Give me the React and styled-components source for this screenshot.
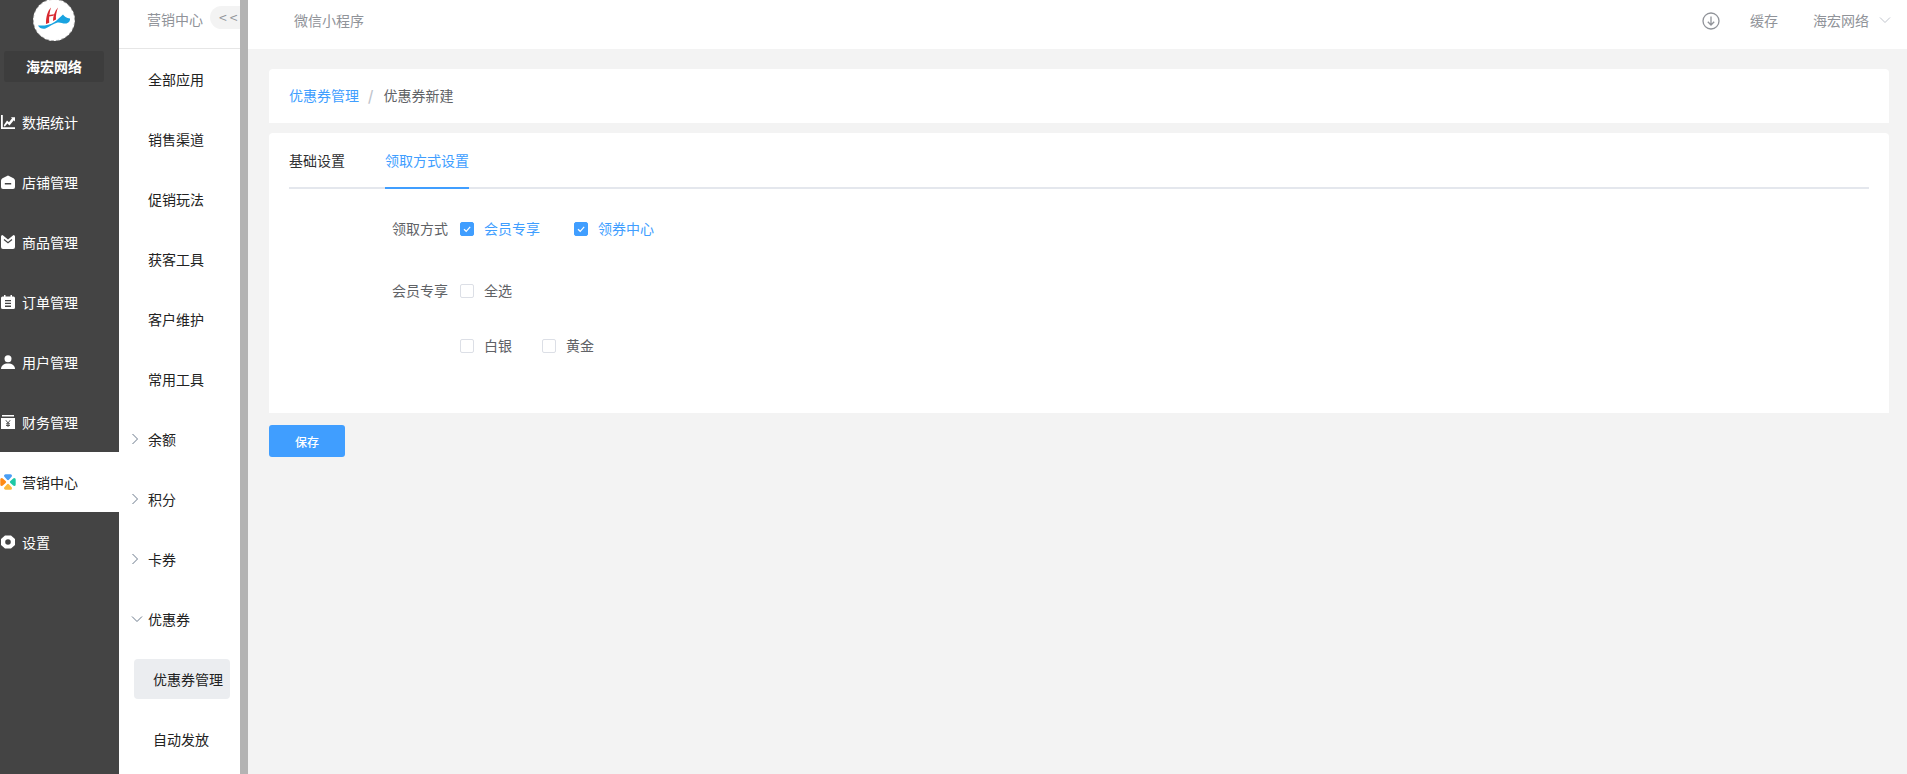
import React from "react";
import styled, { createGlobalStyle } from "styled-components";

const Global = createGlobalStyle`
  html, body { margin: 0; padding: 0; height: 100%; overflow: hidden; background: #f3f3f3; }
  body { font-family: "Noto Sans CJK SC", "Liberation Sans", sans-serif; font-size: 14px; }
  * { box-sizing: border-box; }
`;

const Page = styled.div`display: flex; height: 774px; width: 1907px; overflow: hidden;`;
const Rail = styled.aside`width: 119px; flex: none; background: #444; display: flex; flex-direction: column;`;
const Brand = styled.div`height: 92px; flex: none; display: flex; flex-direction: column; padding: 0 15px 0 4px;`;
const LogoDisc = styled.div`width: 42px; height: 42px; margin-top: -1px; margin-left: 29px; flex: none; border-radius: 50%; background: #fff; border: 1px dashed #bbb; display: flex; align-items: center; justify-content: center;`;
const BrandName = styled.div`width: 100px; height: 31px; margin-top: 10px; border-radius: 3px; background: #3d3d3d; color: #fff; font-weight: 700; font-size: 14px; line-height: 31px; text-align: center;`;
const RailItem = styled.div`
  height: 60px; display: flex; align-items: center; gap: ${p => (p.$active ? 6 : 7)}px; padding-left: ${p => (p.$active ? 0 : 1)}px; font-size: 14px;
  color: ${p => (p.$active ? "#222" : "#fff")};
  background: ${p => (p.$active ? "#fff" : "transparent")};
  svg { flex: none; }
`;

const SubNav = styled.nav`width: 121px; flex: none; background: #fff; display: flex; flex-direction: column; overflow: hidden;`;
const SubHead = styled.div`height: 49px; flex: none; border-bottom: 1px solid #e6e6e6; display: flex; align-items: center; padding: 0 0 10px 28px; color: #909399; white-space: nowrap;`;
const Collapse = styled.div`margin: -3px 0 0 7px; height: 23px; width: 30px; flex: none; border-radius: 12px 0 0 12px; background: #f3f3f3; color: #909399; font-size: 14px; line-height: 23px; padding-left: 9px; letter-spacing: 3px; white-space: nowrap;`;
const SubItem = styled.div`height: 60px; flex: none; display: flex; align-items: center; padding-left: 29px; color: #222; position: relative; white-space: nowrap;`;
const Caret = styled.svg`position: absolute; left: 12px; top: 50%; transform: translateY(-50%);`;
const Nested = styled.div`height: 60px; flex: none; display: flex; align-items: center; padding-left: 15px;`;
const NestedLabel = styled.div`
  width: 96px; height: 40px; line-height: 40px; border-radius: 4px; padding-left: 19px; color: #222; white-space: nowrap;
  background: ${p => (p.$active ? "#ebedf0" : "transparent")};
`;
const ScrollStrip = styled.div`width: 8px; flex: none; background: #b3b3b3;`;

const Main = styled.main`flex: 1; min-width: 0; display: flex; flex-direction: column; background: #f3f3f3;`;
const TopBar = styled.header`height: 49px; flex: none; background: #fff; display: flex; align-items: center; padding: 0 0 9px 46px; color: #909399;`;
const TopRight = styled.div`margin-left: auto; display: flex; align-items: center; padding-right: 16px;`;
const TopLabel = styled.span`margin-left: ${p => p.$gap}px;`;
const TopCaret = styled.svg`margin-left: 10px;`;
const DownloadIcon = styled.svg`margin-top: 1px;`;
const Content = styled.div`padding: 20px 18px 0 21px;`;
const Crumbs = styled.div`height: 54px; background: #fff; border-radius: 4px 4px 0 0; display: flex; align-items: center; padding: 0 0 2px 20px; color: #606266;`;
const CrumbLink = styled.span`color: #409eff;`;
const CrumbSep = styled.span`margin: 0 10px 0 9px; color: #c0c4cc; font-weight: 700;`;
const Card = styled.section`margin-top: 10px; height: 280px; background: #fff; border-radius: 4px 4px 0 0; padding: 0 20px;`;
const Tabs = styled.div`height: 56px; display: flex; border-bottom: 2px solid #e4e7ed;`;
const Tab = styled.div`
  height: 56px; line-height: 54px; margin-right: 40px; color: ${p => (p.$active ? "#409eff" : "#303133")};
  border-bottom: 2px solid ${p => (p.$active ? "#409eff" : "transparent")};
`;
const Row = styled.div`display: flex; align-items: center; height: 20px; margin-top: ${p => p.$top}px; padding-left: 103px;`;
const Label = styled.div`width: 56px; color: #606266; margin-right: 12px; white-space: nowrap;`;
const Check = styled.label`display: inline-flex; align-items: center; margin-right: ${p => p.$gap || 30}px; color: ${p => (p.$on ? "#409eff" : "#606266")};`;
const Box = styled.span`
  width: 14px; height: 14px; margin-top: 1px; border-radius: 2px; margin-right: 10px; display: inline-flex; align-items: center; justify-content: center;
  background: ${p => (p.$on ? "#409eff" : "#fff")};
  border: 1px solid ${p => (p.$on ? "#409eff" : "#dcdfe6")};
`;
const SaveBtn = styled.button`
  display: block; margin-top: 12px; width: 76px; height: 32px; border: 0; border-radius: 3px; background: #409eff; color: #fff; font: inherit; font-size: 12px; font-weight: 500;
`;
const LogoArt = styled.svg`margin-bottom: 4px;`;

const ic = { width: 14, height: 14, viewBox: "0 0 14 14", fill: "#fff" };
const IconChart = () => (
  <svg {...ic}><path d="M0 0h1.800v12.200H14V14H0z" /><path d="M2.800 10.200 6 5.400l2 1.800 3-3.900-1.200-1.100H14v4.200l-1.200-1.200-4.300 5.300-2.100-2-2.700 3.200z" /></svg>
);
const IconStore = () => (
  <svg {...ic}><path d="M7 .5 12 3c1.300.7 2 1.700 2 3v6a2 2 0 0 1-2 2H2a2 2 0 0 1-2-2V6c0-1.300.7-2.300 2-3z" /><rect x="3.800" y="8" width="6.400" height="1.500" fill="#444" /></svg>
);
const IconMail = () => (
  <svg {...ic}><path d="M1.500 0 7 4.500 12.500 0A1.500 1.500 0 0 1 14 1.500V12a2 2 0 0 1-2 2H2a2 2 0 0 1-2-2V1.500A1.500 1.500 0 0 1 1.500 0z" /><path d="M3 4.500 7 7.800l4-3.300" fill="none" stroke="#444" strokeWidth="1.200" /></svg>
);
const IconClip = () => (
  <svg {...ic}><path d="M3 0h1.500v1.500h5V0H11v1.500h1.500A1.500 1.500 0 0 1 14 3v9.500a1.500 1.500 0 0 1-1.500 1.500h-11A1.500 1.500 0 0 1 0 12.500V3a1.500 1.500 0 0 1 1.500-1.500H3z" /><path d="M4 5h6v1.300H4zm0 2.800h6v1.300H4zm0 2.800h6V12H4z" fill="#444" /></svg>
);
const IconUser = () => (
  <svg {...ic}><circle cx="7" cy="3.700" r="3.500" /><path d="M0 14c0-3.500 3-5.500 7-5.500s7 2 7 5.500z" /></svg>
);
const IconCash = () => (
  <svg {...ic}><path d="M1 0h12v1.400H1zM0 3h14v11H0z" /><path d="M4.800 5.200 7 8l2.200-2.800M7 8v4M5 8.800h4M5 10.500h4" fill="none" stroke="#444" strokeWidth=".9" /></svg>
);
const IconPetals = () => (
  <svg width="16" height="16" viewBox="0 0 16 16">
    <path d="M5.500 1.800h5L8 4.600z" fill="#4a9ff5" stroke="#4a9ff5" strokeWidth="3" strokeLinejoin="round" />
    <path d="M14.200 5.500v5L11.400 8z" fill="#1fc8a5" stroke="#1fc8a5" strokeWidth="3" strokeLinejoin="round" />
    <path d="M5.500 14.200h5L8 11.400z" fill="#fdb93c" stroke="#fdb93c" strokeWidth="3" strokeLinejoin="round" />
    <path d="M1.800 5.500v5L4.600 8z" fill="#ff8a14" stroke="#ff8a14" strokeWidth="3" strokeLinejoin="round" />
  </svg>
);
const IconHex = () => (
  <svg {...ic}><path fillRule="evenodd" d="M4 .5h6L14 4v6l-4 3.500H4L0 10V4zM7 4.200a2.800 2.800 0 1 0 0 5.600 2.800 2.800 0 0 0 0-5.600z" /></svg>
);
const Logo = () => (
  <LogoArt width="34" height="24" viewBox="37 5 34 24">
    <path d="M51 6.500C47.500 10 45.800 16 46 23l3.200-1.300C48.800 17 49.500 11 51 6.500z" fill="#d8282f" />
    <path d="M58 6.500c-3.500 3.500-5 9-5 13.500l3-1.500C55.500 15 56.500 10.500 58 6.500z" fill="#d8282f" />
    <path d="M49 14l5-.8-.4 1.500-4.700.8z" fill="#d8282f" />
    <path d="M38 24.500c6 .5 12-.5 16.500-3.500 3.500-2.300 5.500-5 8.500-7.500 1 1.800 3.500 3.500 7 4 .4 2.500-1.500 5-4.500 5-3.500 0-5-1.500-8-1-4.500 1-8 4.500-12 6-3 .8-6-.3-7.500-3z" fill="#19a3e0" />
  </LogoArt>
);
const Right = () => (
  <Caret width="8" height="12" viewBox="0 0 8 12" fill="none" stroke="#6b7a8c"><path d="M1.500 1 6.500 6l-5 5" /></Caret>
);
const Down = () => (
  <Caret width="12" height="8" viewBox="0 0 12 8" fill="none" stroke="#6b7a8c"><path d="M1 1.500 6 6.500l5-5" /></Caret>
);
const Tick = () => (
  <svg width="10" height="10" viewBox="0 0 10 10" fill="none" stroke="#fff" strokeWidth="1.200"><path d="M2 5.200 4.200 7.300 8.200 2.800" /></svg>
);

const rail = [
  ["数据统计", IconChart], ["店铺管理", IconStore], ["商品管理", IconMail], ["订单管理", IconClip],
  ["用户管理", IconUser], ["财务管理", IconCash], ["营销中心", IconPetals, true], ["设置", IconHex],
];
const plain = ["全部应用", "销售渠道", "促销玩法", "获客工具", "客户维护", "常用工具"];

export default function App() {
  return (
    <Page>
      <Global />
      <Rail>
        <Brand>
          <LogoDisc><Logo /></LogoDisc>
          <BrandName>海宏网络</BrandName>
        </Brand>
        {rail.map(([t, I, a]) => (
          <RailItem key={t} $active={a}><I />{t}</RailItem>
        ))}
      </Rail>
      <SubNav>
        <SubHead>营销中心<Collapse>&lt;&lt;</Collapse></SubHead>
        {plain.map(t => <SubItem key={t}>{t}</SubItem>)}
        {["余额", "积分", "卡券"].map(t => <SubItem key={t}><Right />{t}</SubItem>)}
        <SubItem><Down />优惠券</SubItem>
        <Nested><NestedLabel $active>优惠券管理</NestedLabel></Nested>
        <Nested><NestedLabel>自动发放</NestedLabel></Nested>
      </SubNav>
      <ScrollStrip />
      <Main>
        <TopBar>
          微信小程序
          <TopRight>
            <DownloadIcon width="18" height="18" viewBox="0 0 18 18" fill="none" stroke="#909399" strokeWidth="1.300">
              <circle cx="9" cy="9" r="8" /><path d="M9 4.500v8.500M5.800 9.800 9 13l3.200-3.200" />
            </DownloadIcon>
            <TopLabel $gap={30}>缓存</TopLabel>
            <TopLabel $gap={35}>海宏网络</TopLabel>
            <TopCaret width="12" height="8" viewBox="0 0 12 8" fill="none" stroke="#c0c4cc"><path d="M1 1.500 6 6.500l5-5" /></TopCaret>
          </TopRight>
        </TopBar>
        <Content>
          <Crumbs><CrumbLink>优惠券管理</CrumbLink><CrumbSep>/</CrumbSep>优惠券新建</Crumbs>
          <Card>
            <Tabs><Tab>基础设置</Tab><Tab $active>领取方式设置</Tab></Tabs>
            <Row $top={29}>
              <Label>领取方式</Label>
              <Check $on $gap={34}><Box $on><Tick /></Box>会员专享</Check>
              <Check $on><Box $on><Tick /></Box>领券中心</Check>
            </Row>
            <Row $top={42}>
              <Label>会员专享</Label>
              <Check><Box />全选</Check>
            </Row>
            <Row $top={35}>
              <Label />
              <Check><Box />白银</Check>
              <Check><Box />黄金</Check>
            </Row>
          </Card>
          <SaveBtn>保存</SaveBtn>
        </Content>
      </Main>
    </Page>
  );
}
